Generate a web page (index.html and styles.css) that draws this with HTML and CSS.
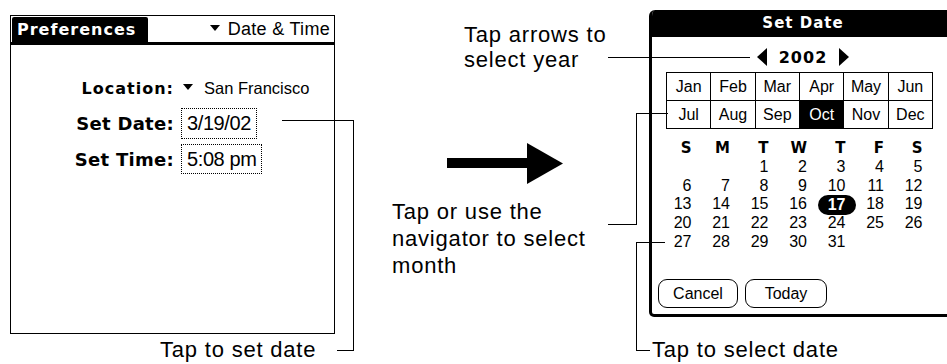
FILE: index.html
```html
<!DOCTYPE html>
<html lang="en">
<head>
    <meta charset="UTF-8">
    <meta name="viewport" content="width=device-width, initial-scale=1.0">
    <title>Set Date</title>
    <link rel="stylesheet" href="styles.css">
</head>
<body>
    <div class="figure">
        <!-- left: preferences screen -->
        <div class="col-left">
            <div class="palm prefs">
                <div class="titlebar">
                    <div class="tab">Preferences</div>
                    <div class="picker"><span class="tri"></span>Date &amp; Time</div>
                </div>
                <div class="fields">
                    <div class="lbl">Location:</div>
                    <div class="val loc"><span class="tri"></span>San Francisco</div>
                    <div class="lbl big">Set Date:</div>
                    <div class="val"><span class="dotbox">3/19/02</span></div>
                    <div class="lbl big">Set Time:</div>
                    <div class="val"><span class="dotbox">5:08 pm</span></div>
                </div>
            </div>
            <div class="caption cap-left">Tap to set date</div>
        </div>

        <!-- middle: notes and arrow -->
        <div class="col-mid">
            <div class="note note-year">Tap arrows to<br>select year</div>
            <svg class="big-arrow" width="116" height="41" viewBox="0 0 116 41">
                <rect x="0" y="15" width="81" height="10" fill="#000"/>
                <polygon points="80,0 116,20.5 80,41" fill="#000"/>
            </svg>
            <div class="note note-month">Tap or use the<br>navigator to select<br>month</div>
        </div>

        <!-- right: set date dialog -->
        <div class="col-right">
            <div class="palm dialog">
                <div class="dlg-title">Set Date</div>
                <div class="year-row">
                    <span class="arrow-l"></span>
                    <span class="year">2002</span>
                    <span class="arrow-r"></span>
                </div>
                <div class="months">
                    <div>Jan</div><div>Feb</div><div>Mar</div><div>Apr</div><div>May</div><div>Jun</div>
                    <div>Jul</div><div>Aug</div><div>Sep</div><div class="on">Oct</div><div>Nov</div><div>Dec</div>
                </div>
                <div class="days">
                    <div class="dh">S</div><div class="dh">M</div><div class="dh">T</div><div class="dh">W</div><div class="dh">T</div><div class="dh">F</div><div class="dh">S</div>
                    <div></div><div></div><div>1</div><div>2</div><div>3</div><div>4</div><div>5</div>
                    <div>6</div><div>7</div><div>8</div><div>9</div><div>10</div><div>11</div><div>12</div>
                    <div>13</div><div>14</div><div>15</div><div>16</div><div><span class="today">17</span></div><div>18</div><div>19</div>
                    <div>20</div><div>21</div><div>22</div><div>23</div><div>24</div><div>25</div><div>26</div>
                    <div>27</div><div>28</div><div>29</div><div>30</div><div>31</div>
                </div>
                <div class="buttons">
                    <span class="btn btn-cancel">Cancel</span>
                    <span class="btn btn-today">Today</span>
                </div>
            </div>
            <div class="caption cap-right">Tap to select date</div>
        </div>

        <!-- leader lines -->
        <svg class="leaders" width="947" height="364" viewBox="0 0 947 364">
            <polyline points="282,120.5 353.5,120.5 353.5,350.5 337,350.5"/>
            <polyline points="608,57.5 750,57.5"/>
            <polyline points="608,224.5 636.5,224.5 636.5,113.5 668,113.5"/>
            <polyline points="665,242.5 636.5,242.5 636.5,350.5 650,350.5"/>
        </svg>
    </div>
</body>
</html>
```

FILE: styles.css
```css
body {
    margin: 0;
    background: #fff;
    color: #000;
    font-family: "Liberation Sans", Arial, sans-serif;
}

.figure {
    position: relative;
    display: flex;
    width: 947px;
    height: 364px;
    overflow: hidden;
}

.col-left {
    flex: none;
    width: 335px;
    padding: 15px 0 0 10px;
    box-sizing: border-box;
}

.col-mid {
    flex: none;
    width: 314px;
}

.col-right {
    flex: none;
    width: 298px;
    padding-top: 10px;
    box-sizing: border-box;
}

/* palm screens */
.palm {
    box-sizing: border-box;
    background: #fff;
}

.prefs {
    width: 325px;
    height: 319px;
    border: 1px solid #000;
}

.titlebar {
    display: flex;
    height: 28px;
    margin: 1px 0 0 0;
    border-bottom: 3px solid #000;
    box-sizing: border-box;
}

.tab {
    width: 136px;
    margin-left: 1px;
    padding-left: 5px;
    box-sizing: border-box;
    background: #000;
    color: #fff;
    border-radius: 2px 2px 0 0;
    font-family: "DejaVu Sans", sans-serif;
    font-weight: bold;
    font-size: 16px;
    line-height: 25px;
    letter-spacing: 1px;
}

.picker {
    margin-left: auto;
    padding-right: 4px;
    font-size: 18px;
    line-height: 25px;
    letter-spacing: 0.3px;
}

.tri {
    display: inline-block;
    width: 0;
    height: 0;
    border-left: 5px solid transparent;
    border-right: 5px solid transparent;
    border-top: 6px solid #000;
    margin-right: 8px;
    vertical-align: 4px;
}

.fields {
    display: grid;
    grid-template-columns: 163px auto;
    grid-template-rows: 25px 31px 30px;
    column-gap: 7px;
    row-gap: 5px;
    margin-top: 33px;
}

.lbl {
    text-align: right;
    font-family: "DejaVu Sans", sans-serif;
    font-weight: bold;
    font-size: 16px;
    line-height: 21px;
    letter-spacing: 1px;
}

.lbl.big {
    font-size: 18px;
    line-height: 31px;
    letter-spacing: 0.3px;
}

.val.loc {
    font-size: 16.5px;
    line-height: 21px;
}

.val.loc .tri {
    margin-left: 2px;
    margin-right: 11px;
}

.dotbox {
    display: inline-block;
    height: 100%;
    padding: 0 5px;
    box-sizing: border-box;
    border: 1px dotted #000;
    font-size: 20px;
    line-height: 29px;
    letter-spacing: -0.4px;
}

/* set date dialog */
.dialog {
    width: 308px;
    height: 307px;
    border: 3px solid #000;
    border-top: none;
    border-radius: 6px 6px 5px 5px;
    overflow: hidden;
}

.dlg-title {
    height: 27px;
    margin: 0 -3px;
    background: #000;
    color: #fff;
    text-align: center;
    font-family: "DejaVu Sans", sans-serif;
    font-weight: bold;
    font-size: 15px;
    line-height: 27px;
    letter-spacing: 1px;
}

.year-row {
    display: flex;
    justify-content: center;
    align-items: center;
    gap: 12px;
    height: 30px;
    padding-top: 5px;
}

.year {
    font-family: "DejaVu Sans", sans-serif;
    font-weight: bold;
    font-size: 16px;
    letter-spacing: 1px;
}

.arrow-l,
.arrow-r {
    width: 0;
    height: 0;
    border-top: 9px solid transparent;
    border-bottom: 9px solid transparent;
}

.arrow-l {
    border-right: 10px solid #000;
}

.arrow-r {
    border-left: 10px solid #000;
}

.months {
    display: grid;
    grid-template-columns: repeat(6, 1fr);
    width: 267px;
    margin-left: 14px;
    border-left: 1px solid #000;
    border-top: 1px solid #000;
    box-sizing: border-box;
}

.months div {
    height: 28px;
    border-right: 1px solid #000;
    border-bottom: 1px solid #000;
    box-sizing: border-box;
    text-align: center;
    font-size: 16px;
    line-height: 27px;
}

.months .on {
    background: #000;
    color: #fff;
}

.days {
    display: grid;
    grid-template-columns: repeat(7, 38.5px);
    grid-auto-rows: 18.75px;
    margin: 10px 0 0 1px;
    text-align: right;
    font-size: 16px;
    line-height: 18.75px;
}

.days .dh {
    font-family: "DejaVu Sans", sans-serif;
    font-weight: bold;
    font-size: 15px;
}

.today {
    display: inline-block;
    margin-right: -10px;
    padding: 0 10px;
    background: #000;
    color: #fff;
    font-weight: bold;
    border-radius: 10px;
    line-height: 20px;
}

.buttons {
    display: flex;
    gap: 7px;
    margin: 27px 0 0 6px;
}

.btn {
    height: 29px;
    border: 1px solid #000;
    border-radius: 9px;
    box-sizing: border-box;
    text-align: center;
    font-size: 16px;
    line-height: 27px;
}

.btn-cancel {
    width: 80px;
}

.btn-today {
    width: 82px;
}

/* annotations */
.note,
.caption {
    font-size: 22px;
    letter-spacing: 0.8px;
}

.note-year {
    margin: 22px 0 0 129px;
    line-height: 25px;
}

.big-arrow {
    display: block;
    margin: 71px 0 0 112px;
}

.note-month {
    margin: 14px 0 0 57px;
    line-height: 27px;
}

.cap-left {
    margin: 3px 0 0 150px;
    line-height: 26px;
}

.cap-right {
    margin: 20px 0 0 3px;
    line-height: 26px;
}

.leaders {
    position: absolute;
    left: 0;
    top: 0;
    pointer-events: none;
}

.leaders polyline {
    fill: none;
    stroke: #000;
    stroke-width: 1;
    shape-rendering: crispEdges;
}
```
